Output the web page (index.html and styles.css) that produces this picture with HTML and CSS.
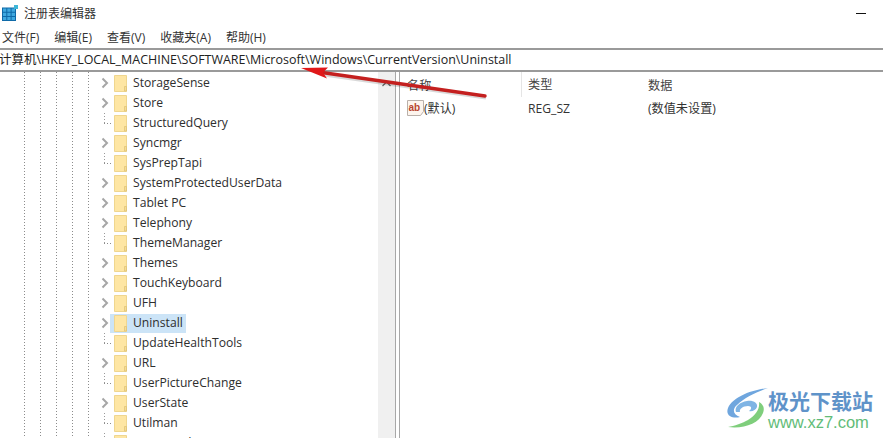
FILE: index.html
```html
<!DOCTYPE html>
<html lang="zh-CN">
<head>
<meta charset="utf-8">
<title>注册表编辑器</title>
<link rel="stylesheet" href="styles.css">
</head>
<body>
<svg class="defs" width="0" height="0" aria-hidden="true">
  <symbol id="folder" viewBox="0 0 14 17">
    <path d="M.5.5h12v16H.5z" fill="#fee6a4" stroke="#efd68f"/>
    <path d="M10.500 16V11.500h2V16z" fill="#f6dd96" stroke="#dcc074" stroke-width=".7"/>
  </symbol>
  <symbol id="chev" viewBox="0 0 8 12">
    <path d="M1.500 1.500 6 6l-4.500 4.500" fill="none" stroke="#a6a6a6" stroke-width="2"/>
  </symbol>
</svg>
<div class="app">
  <header class="title">
    <svg class="appicon" viewBox="0 0 16 16" width="16" height="16">
      <path d="M0 2.500h14V16H0z" fill="#0f6aa8"/>
      <path d="M1 3.500h3.300v3.300H1zM5.300 3.500h3.300v3.300H5.300zM9.600 3.500h3.400v3.300H9.600zM1 7.800h3.300v3.300H1zM5.300 7.800h3.300v3.300H5.300zM9.600 7.800h3.400v3.300H9.600zM1 12.100h3.300V15H1zM5.300 12.100h3.300V15H5.300zM9.600 12.100h3.400V15H9.600z" fill="#3fa9e0"/>
      <path d="M12 0h4v4h-4z" fill="#3fb6d8"/>
    </svg>
    <span class="title-text">注册表编辑器</span>
    <span class="min"></span>
  </header>
  <nav class="menu">
    <span>文件(F)</span><span>编辑(E)</span><span>查看(V)</span><span>收藏夹(A)</span><span>帮助(H)</span>
  </nav>
  <div class="address"><span class="path">计算机\HKEY_LOCAL_MACHINE\SOFTWARE\Microsoft\Windows\CurrentVersion\Uninstall</span></div>
  <main class="panes">
    <section class="tree">
      <div class="row"><svg class="chev"><use href="#chev"/></svg><svg class="folder"><use href="#folder"/></svg><span class="label">StorageSense</span></div>
      <div class="row"><svg class="chev"><use href="#chev"/></svg><svg class="folder"><use href="#folder"/></svg><span class="label">Store</span></div>
      <div class="row leaf"><i class="dash"></i><svg class="folder"><use href="#folder"/></svg><span class="label">StructuredQuery</span></div>
      <div class="row"><svg class="chev"><use href="#chev"/></svg><svg class="folder"><use href="#folder"/></svg><span class="label">Syncmgr</span></div>
      <div class="row leaf"><i class="dash"></i><svg class="folder"><use href="#folder"/></svg><span class="label">SysPrepTapi</span></div>
      <div class="row"><svg class="chev"><use href="#chev"/></svg><svg class="folder"><use href="#folder"/></svg><span class="label">SystemProtectedUserData</span></div>
      <div class="row"><svg class="chev"><use href="#chev"/></svg><svg class="folder"><use href="#folder"/></svg><span class="label">Tablet PC</span></div>
      <div class="row"><svg class="chev"><use href="#chev"/></svg><svg class="folder"><use href="#folder"/></svg><span class="label">Telephony</span></div>
      <div class="row leaf"><i class="dash"></i><svg class="folder"><use href="#folder"/></svg><span class="label">ThemeManager</span></div>
      <div class="row"><svg class="chev"><use href="#chev"/></svg><svg class="folder"><use href="#folder"/></svg><span class="label">Themes</span></div>
      <div class="row"><svg class="chev"><use href="#chev"/></svg><svg class="folder"><use href="#folder"/></svg><span class="label">TouchKeyboard</span></div>
      <div class="row"><svg class="chev"><use href="#chev"/></svg><svg class="folder"><use href="#folder"/></svg><span class="label">UFH</span></div>
      <div class="row selected"><svg class="chev"><use href="#chev"/></svg><svg class="folder"><use href="#folder"/></svg><span class="label">Uninstall</span></div>
      <div class="row leaf"><i class="dash"></i><svg class="folder"><use href="#folder"/></svg><span class="label">UpdateHealthTools</span></div>
      <div class="row"><svg class="chev"><use href="#chev"/></svg><svg class="folder"><use href="#folder"/></svg><span class="label">URL</span></div>
      <div class="row leaf"><i class="dash"></i><svg class="folder"><use href="#folder"/></svg><span class="label">UserPictureChange</span></div>
      <div class="row"><svg class="chev"><use href="#chev"/></svg><svg class="folder"><use href="#folder"/></svg><span class="label">UserState</span></div>
      <div class="row leaf"><i class="dash"></i><svg class="folder"><use href="#folder"/></svg><span class="label">Utilman</span></div>
      <div class="row leaf"><i class="dash"></i><svg class="folder"><use href="#folder"/></svg><span class="label">VFUProvider</span></div>
    </section>
    <div class="scrollbar">
      <svg class="scroll-up" viewBox="0 0 9 6" width="9" height="6"><path d="M.5 5 4.500 1l4 4" fill="none" stroke="#606060" stroke-width="1.200"/></svg>
    </div>
    <div class="splitter"></div>
    <section class="list">
      <div class="list-head"><span class="col c1">名称</span><span class="col c2">类型</span><span class="col c3">数据</span></div>
      <div class="list-row">
        <span class="col c1 name">
          <svg class="ab" viewBox="0 0 17 16" width="17" height="16">
            <path d="M.5.500h16v11l-3 4H.5z" fill="#fdf5ee" stroke="#b9b0aa"/>
            <text x="1.500" y="10.500" class="abtext">ab</text>
          </svg>(默认)
        </span>
        <span class="col c2">REG_SZ</span>
        <span class="col c3">(数值未设置)</span>
      </div>
    </section>
  </main>
  <svg class="arrow" viewBox="0 0 883 438" width="883" height="438" aria-hidden="true">
    <path d="M486 97.500 324 74.500" stroke="#00000026" stroke-width="4" fill="none"/>
    <path d="M485 96 322 72.500" stroke="#c4201f" stroke-width="3.400" stroke-linecap="round" fill="none"/>
    <path d="M301 68 328 67.500 323 72.500 327 78.500z" fill="#e0181a"/>
  </svg>
  <aside class="mark">
    <svg class="logo" viewBox="0 0 44 40" width="44" height="40">
      <path d="M43 0C26 2 8 9 3 20c-3 8 5 11 12 9C8 27 7 21 12 17 20 9 32 4 43 0z" fill="#6fa6de"/>
      <path d="M11 24c-2-5 4-10 11-11 6-1 11 2 10 6-1 3-5 5-8 4 3-2 3-5-1-5-5 0-9 3-8 6z" fill="#7fb4e4"/>
      <path d="M3 39c15 2 31-3 35-14 2-5 0-9-4-11 1 7-3 13-11 18-5 3-14 6-20 7z" fill="#7fce7c"/>
    </svg>
    <div class="mark-text">
      <span class="mark-cn">极光下载站</span>
      <span class="mark-url">www.xz7.com</span>
    </div>
  </aside>
</div>
</body>
</html>
```
FILE: styles.css
```css
* { box-sizing: border-box; }
html, body { margin: 0; padding: 0; }
body { background: #fff; }
.defs { position: absolute; }
.app {
  position: relative;
  width: 883px;
  height: 438px;
  overflow: hidden;
  background: #fff;
  color: #222;
  font: 12.150px "Open Sans", "Noto Sans CJK SC", sans-serif;
}
.title { display: flex; align-items: center; height: 26px; padding-left: 2px; }
.appicon { flex: none; }
.title-text { margin-left: 6px; font-size: 12px; color: #333; }
.min { width: 10px; height: 1px; background: #111; margin-left: auto; margin-right: 17px; }
.menu { display: flex; height: 22px; align-items: center; padding-left: 2px; gap: 15px; color: #333; font-size: 12px; }
.address {
  height: 24px;
  border-top: 2px solid #9a9a9a;
  border-bottom: 2px solid #9a9a9a;
  line-height: 20px;
  white-space: nowrap;
  color: #222;
}
.path { margin-left: -1px; display: inline-block; font-size: 12.480px; }
.panes { display: flex; height: 366px; }
.tree {
  position: relative;
  width: 378px;
  flex: none;
  padding-top: 1px;
  background-image:
    repeating-linear-gradient(to bottom, #8c8c8c 0 1px, transparent 1px 3px),
    repeating-linear-gradient(to bottom, #8c8c8c 0 1px, transparent 1px 3px),
    repeating-linear-gradient(to bottom, #8c8c8c 0 1px, transparent 1px 3px),
    repeating-linear-gradient(to bottom, #8c8c8c 0 1px, transparent 1px 3px),
    repeating-linear-gradient(to bottom, #8c8c8c 0 1px, transparent 1px 3px);
  background-size: 1px 100%;
  background-position: 24px 0, 40px 0, 56px 0, 72px 0, 88px 0;
  background-repeat: no-repeat;
}
.row { display: flex; align-items: center; height: 20px; padding-left: 101px; position: relative; }
.leaf::before {
  content: "";
  position: absolute;
  left: 104px;
  top: 0;
  width: 1px;
  height: 10px;
  background: repeating-linear-gradient(to bottom, #9a9a9a 0 1px, transparent 1px 3px);
}
.chev { width: 8px; height: 12px; flex: none; }
.dash {
  width: 8px;
  height: 1px;
  flex: none;
  background: repeating-linear-gradient(to right, #8c8c8c 0 1px, transparent 1px 3px);
  margin-left: 3px;
  margin-right: -3px;
}
.folder { width: 14px; height: 17px; margin-left: 5px; flex: none; }
.label { margin-left: 5px; padding-right: 4px; line-height: 20px; color: #2e2e2e; }
.selected::before {
  content: "";
  position: absolute;
  left: 110px;
  width: 76px;
  top: 1px;
  bottom: 0;
  background: #cce4f7;
}
.selected > * { position: relative; }
.scrollbar { width: 17px; flex: none; background: #f0f0f0; display: flex; justify-content: center; padding-top: 9px; }
.scroll-up { flex: none; }
.splitter { width: 5px; flex: none; background: #fff; border-left: 1px solid #a8a8a8; border-right: 1px solid #a8a8a8; }
.list { flex: 1; }
.list-head { display: flex; height: 25px; align-items: center; color: #444; }
.list-row { display: flex; height: 22px; align-items: center; color: #333; }
.col { flex: none; }
.c1 { width: 121px; padding-left: 7px; }
.c2 { width: 120px; padding-left: 6px; border-left: 1px solid transparent; }
.c3 { padding-left: 7px; }
.list-head .c2 { border-left-color: #e5e5e5; height: 25px; line-height: 25px; }
.name { display: flex; align-items: center; gap: 0; }
.ab { flex: none; }
.abtext { font: bold 10px "Liberation Sans", sans-serif; fill: #b8452f; }
.arrow { position: absolute; left: 0; top: 0; pointer-events: none; }
.mark {
  position: absolute;
  left: 725px;
  top: 388px;
  display: flex;
  align-items: flex-start;
  background: #ffffffb0;
}
.logo { flex: none; }
.mark-text { display: flex; flex-direction: column; margin-left: -1px; }
.mark-cn { font: bold 21px/24px "Noto Sans CJK SC", sans-serif; color: #5f93c9; }
.mark-url { font: 16.500px/18px "Liberation Sans", sans-serif; color: #62bc78; margin-top: 1px; }
```
